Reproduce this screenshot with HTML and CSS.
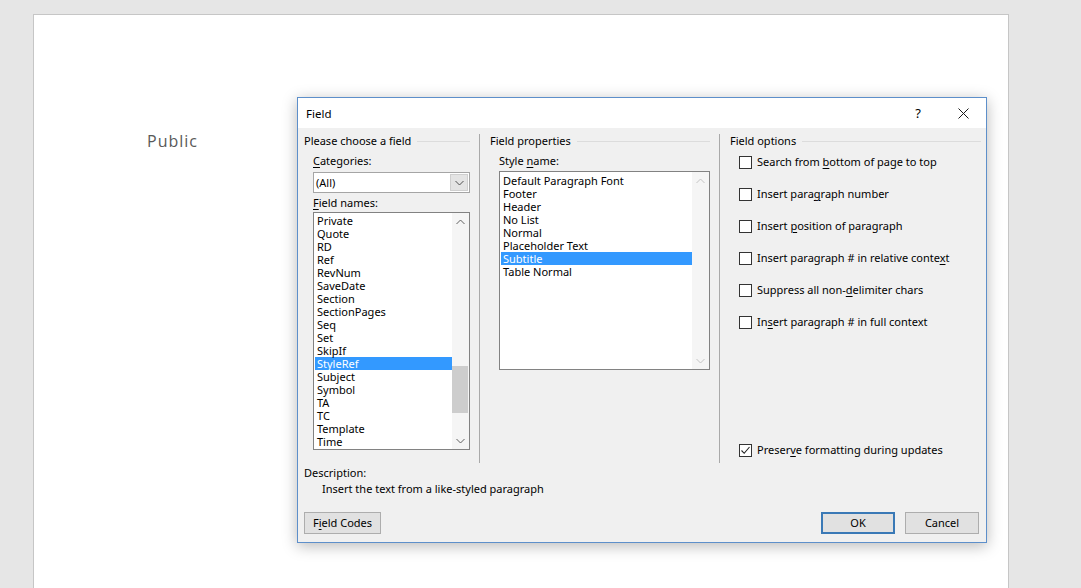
FILE: index.html
```html
<!DOCTYPE html>
<html>
	<head>
		<meta charset="utf-8">
		<title>Field</title>
		<link rel="stylesheet" href="styles.css">
	</head>
	<body>
		<div class="page">
			<div class="page-text">Public</div>
		</div>

		<div class="dialog">
			<div class="titlebar">
				<span class="title">Field</span>
				<span class="help">?</span>
				<span class="close">
					<svg width="11" height="11" viewBox="0 0 11 11"><path d="M0.5 0.5 L10.5 10.5 M10.5 0.5 L0.5 10.5" stroke="#1a1a1a" stroke-width="1" fill="none"/></svg>
				</span>
			</div>

			<div class="dialog-body">
				<div class="cols">
					<div class="col col-choose">
						<div class="group-head">Please choose a field</div>
						<div class="indent">
							<div class="label label-first"><u>C</u>ategories:</div>
							<div class="combo">
								<span class="combo-value">(All)</span>
								<span class="combo-btn">
									<svg width="9" height="6" viewBox="0 0 9 6"><path d="M0.5 1 L4.5 5 L8.5 1" stroke="#505050" fill="none"/></svg>
								</span>
							</div>
							<div class="label"><u>F</u>ield names:</div>
							<div class="listbox names">
								<ul class="items">
									<li>Private</li>
									<li>Quote</li>
									<li>RD</li>
									<li>Ref</li>
									<li>RevNum</li>
									<li>SaveDate</li>
									<li>Section</li>
									<li>SectionPages</li>
									<li>Seq</li>
									<li>Set</li>
									<li>SkipIf</li>
									<li class="selected">StyleRef</li>
									<li>Subject</li>
									<li>Symbol</li>
									<li>TA</li>
									<li>TC</li>
									<li>Template</li>
									<li>Time</li>
								</ul>
								<div class="scrollbar">
									<span class="arrow"><svg width="9" height="6" viewBox="0 0 9 6"><path d="M0.5 5 L4.5 1 L8.5 5" stroke="#606060" fill="none"/></svg></span>
									<span class="track"><span class="thumb"></span></span>
									<span class="arrow"><svg width="9" height="6" viewBox="0 0 9 6"><path d="M0.5 1 L4.5 5 L8.5 1" stroke="#606060" fill="none"/></svg></span>
								</div>
							</div>
						</div>
					</div>

					<div class="col col-props">
						<div class="group-head">Field properties</div>
						<div class="indent">
							<div class="label label-first">Style <u>n</u>ame:</div>
							<div class="listbox styles">
								<ul class="items">
									<li>Default Paragraph Font</li>
									<li>Footer</li>
									<li>Header</li>
									<li>No List</li>
									<li>Normal</li>
									<li>Placeholder Text</li>
									<li class="selected">Subtitle</li>
									<li>Table Normal</li>
								</ul>
								<div class="scrollbar">
									<span class="arrow"><svg width="9" height="6" viewBox="0 0 9 6"><path d="M0.5 5 L4.5 1 L8.5 5" stroke="#c4c4c4" fill="none"/></svg></span>
									<span class="track"></span>
									<span class="arrow"><svg width="9" height="6" viewBox="0 0 9 6"><path d="M0.5 1 L4.5 5 L8.5 1" stroke="#c4c4c4" fill="none"/></svg></span>
								</div>
							</div>
						</div>
					</div>

					<div class="col col-options">
						<div class="group-head">Field options</div>
						<div class="options">
							<div class="option"><span class="check"></span><span>Search from <u>b</u>ottom of page to top</span></div>
							<div class="option"><span class="check"></span><span>Insert para<u>g</u>raph number</span></div>
							<div class="option"><span class="check"></span><span>Insert <u>p</u>osition of paragraph</span></div>
							<div class="option"><span class="check"></span><span>Insert paragraph # in relative conte<u>x</u>t</span></div>
							<div class="option"><span class="check"></span><span>Suppress all non-<u>d</u>elimiter chars</span></div>
							<div class="option"><span class="check"></span><span>In<u>s</u>ert paragraph # in full context</span></div>
							<div class="option option-last"><span class="check"><svg width="11" height="11" viewBox="0 0 11 11"><path d="M1.5 5.5 L4.2 8.3 L9.5 2" stroke="#222" stroke-width="1.1" fill="none"/></svg></span><span>Preser<u>v</u>e formatting during updates</span></div>
						</div>
					</div>
				</div>

				<div class="description">
					<div>Description:</div>
					<div class="description-text">Insert the text from a like-styled paragraph</div>
				</div>

				<div class="buttons">
					<div class="button codes">F<u>i</u>eld Codes</div>
					<div class="spacer"></div>
					<div class="button ok">OK</div>
					<div class="button cancel">Cancel</div>
				</div>
			</div>
		</div>
	</body>
</html>
```

FILE: styles.css
```css
body{
	margin:0;
	background-color:#e6e6e6;
	font-family:"Noto Sans", "Open Sans", sans-serif;
	font-size:11px;
	color:#000;
	overflow:hidden;
}
u{
	text-decoration-thickness:1px;
	text-underline-offset:2px;
}

/* document page behind the dialog */
div.page{
	margin:14px 0 0 33px;
	width:976px;
	height:580px;
	background-color:#fff;
	border:1px solid #c6c6c6;
	padding:116px 0 0 113px;
	box-sizing:border-box;
}
div.page-text{
	font-family:"Open Sans", sans-serif;
	font-size:16px;
	line-height:20px;
	letter-spacing:1px;
	color:#595959;
}

/* dialog */
div.dialog{
	position:absolute;
	left:297px;
	top:97px;
	width:688px;
	height:444px;
	border:1px solid #5d8fca;
	background-color:#f0f0f0;
	box-shadow:0 3px 14px rgba(0,0,0,0.28);
	display:flex;
	flex-direction:column;
}
div.titlebar{
	height:30px;
	background-color:#fff;
	display:flex;
	align-items:center;
	font-size:11.5px;
}
span.title{
	flex:1;
	padding-left:8px;
}
span.help{
	width:30px;
	text-align:center;
	font-size:13px;
}
span.close{
	width:46px;
	margin-left:7px;
	display:flex;
	justify-content:center;
}
div.dialog-body{
	flex:1;
	padding:6px 7px 8px 6px;
	display:flex;
	flex-direction:column;
}

div.cols{
	display:flex;
	height:329px;
}
div.col{
	display:flex;
	flex-direction:column;
}
div.col-choose{
	width:166px;
	padding-right:9px;
	border-right:1px solid #a9a9a9;
}
div.col-props{
	width:220px;
	padding:0 9px 0 10px;
	border-right:1px solid #a9a9a9;
}
div.col-options{
	flex:1;
	padding-left:10px;
	margin-right:-2px;
}
div.group-head{
	display:flex;
	align-items:center;
	line-height:14px;
	white-space:nowrap;
}
div.group-head:after{
	content:"";
	flex:1;
	height:1px;
	margin-left:6px;
	background-color:#dcdcdc;
}
div.indent{
	padding-left:9px;
}
div.label{
	line-height:14px;
	margin-top:3px;
}
div.label-first{
	margin-top:6px;
}

/* combo box */
div.combo{
	margin-top:4px;
	height:19px;
	border:1px solid #a5a5a5;
	background-color:#fff;
	display:flex;
}
span.combo-value{
	flex:1;
	padding-left:2px;
	line-height:19px;
}
span.combo-btn{
	width:16px;
	margin:1px;
	background-color:#e4e4e4;
	border:1px solid #cfcfcf;
	display:flex;
	align-items:center;
	justify-content:center;
}

/* list boxes */
div.listbox{
	border:1px solid #828282;
	background-color:#fff;
	display:flex;
}
div.names{
	margin-top:2px;
	height:236px;
}
div.styles{
	margin-top:3px;
	height:197px;
}
ul.items{
	flex:1;
	list-style:none;
	margin:0;
	padding:1px 0 0 1px;
}
ul.items li{
	line-height:13px;
	padding-left:2px;
	white-space:nowrap;
}
ul.items li.selected{
	background-color:#3399ff;
	color:#fff;
}
div.styles ul.items{
	padding-top:2px;
}
div.scrollbar{
	width:17px;
	background-color:#f5f5f5;
	display:flex;
	flex-direction:column;
}
span.arrow{
	height:17px;
	display:flex;
	align-items:center;
	justify-content:center;
}
span.track{
	flex:1;
	display:flex;
	flex-direction:column;
}
span.thumb{
	margin:136px 1px 0 0;
	height:47px;
	background-color:#cdcdcd;
}

/* options */
div.options{
	flex:1;
	display:flex;
	flex-direction:column;
	padding-left:9px;
}
div.option{
	display:flex;
	align-items:center;
	line-height:14px;
	margin-top:18px;
	white-space:nowrap;
}
div.option:first-child{
	margin-top:7px;
}
div.option-last{
	margin-top:auto;
	margin-bottom:6px;
}
span.check{
	width:11px;
	height:11px;
	border:1px solid #333;
	background-color:#fff;
	margin-right:5px;
	display:flex;
}

/* bottom */
div.description{
	margin-top:2px;
	line-height:16px;
}
div.description-text{
	padding-left:18px;
}
div.buttons{
	margin-top:15px;
	display:flex;
}
div.button{
	height:20px;
	line-height:20px;
	border:1px solid #adadad;
	background-color:#e1e1e1;
	text-align:center;
}
div.codes{
	width:75px;
}
div.spacer{
	flex:1;
}
div.ok{
	width:70px;
	height:18px;
	line-height:18px;
	border:2px solid #3a79b6;
	margin-right:10px;
}
div.cancel{
	width:72px;
}
```
